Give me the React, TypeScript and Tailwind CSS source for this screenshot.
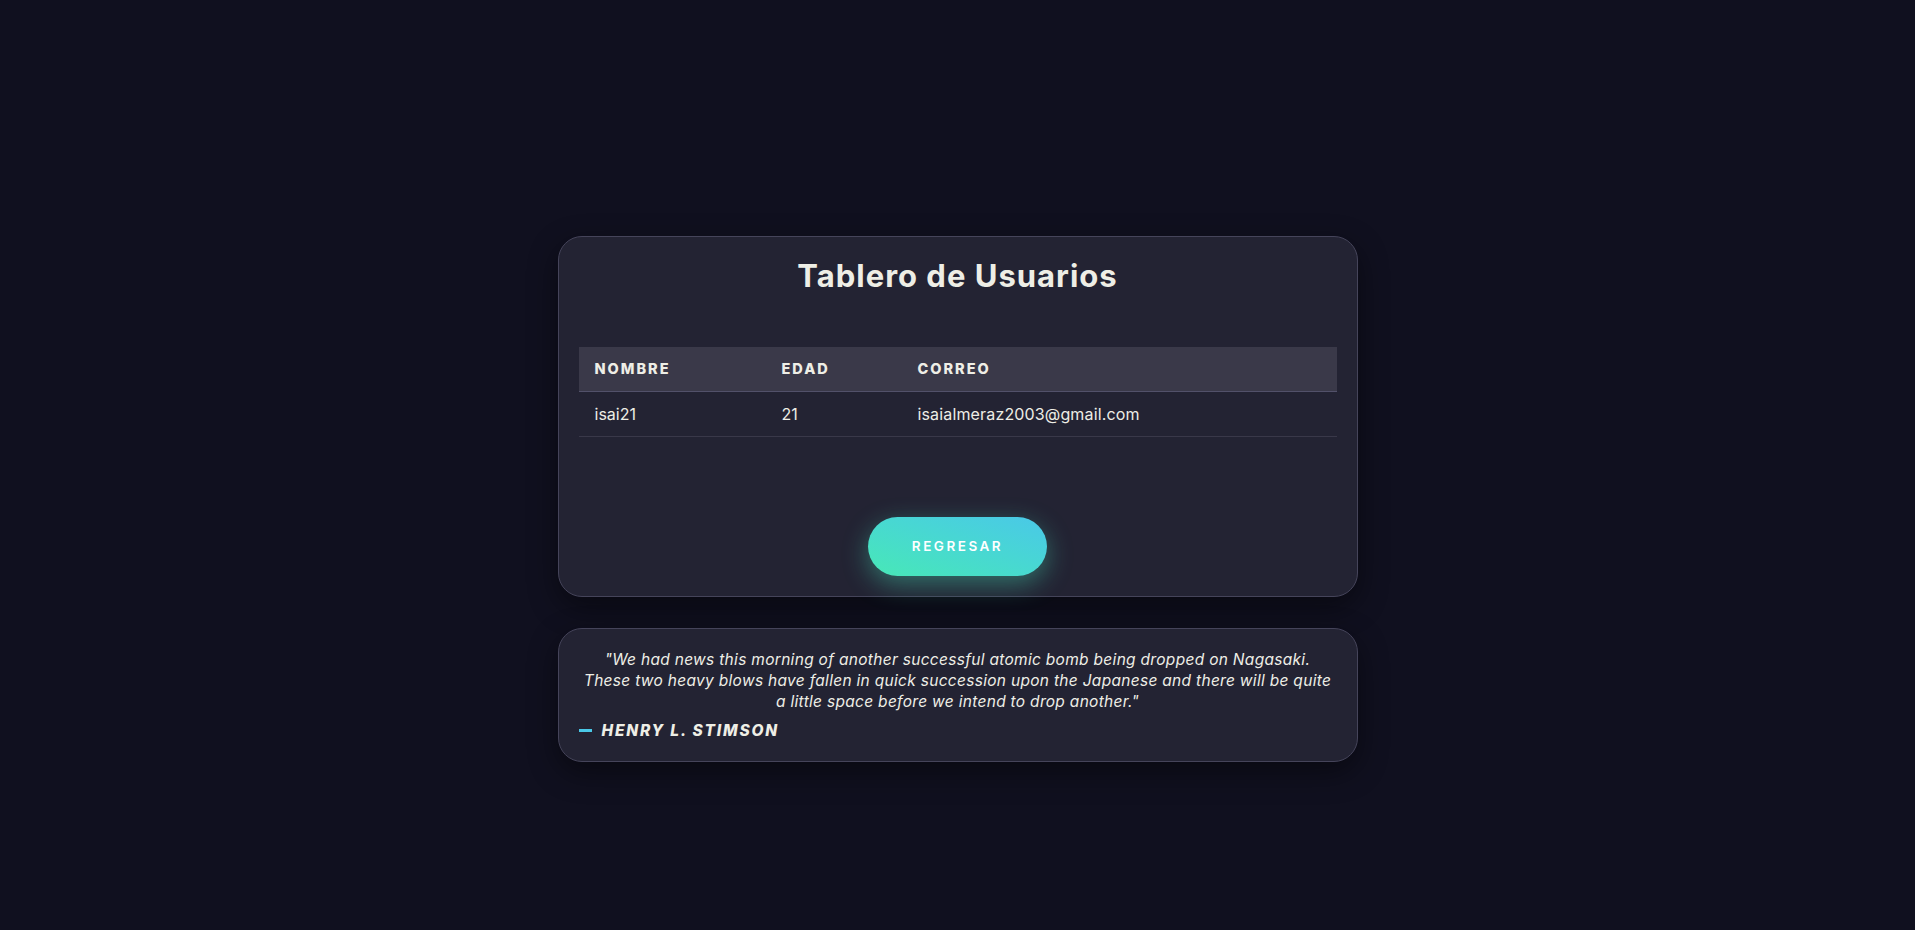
import React from 'react';

const users = [{ nombre: 'isai21', edad: 21, correo: 'isaialmeraz2003@gmail.com' }];

const App = () => {
  return (
    <div
      className="min-h-screen bg-[#10101f] pt-[236px] pb-10 text-[#eeeee6]"
      style={{ fontFamily: 'Inter, "Noto Sans", sans-serif' }}
    >
      <div className="mx-auto w-[800px]">
        <div className="rounded-3xl border border-[#45445a] bg-[#232333] p-5 shadow-[0_10px_30px_rgba(0,0,0,0.45)]">
          <h1 className="text-center text-[31px] leading-[38px] font-bold tracking-[1px]">Tablero de Usuarios</h1>

          <table className="mt-[52px] w-full border-collapse text-left">
            <thead>
              <tr className="bg-[#3a3949] border-b border-[#52516a]">
                <th className="w-[187px] px-4 h-[44px] text-[14.5px] font-extrabold tracking-[2px]">NOMBRE</th>
                <th className="w-[136px] px-4 h-[44px] text-[14.5px] font-extrabold tracking-[2px]">EDAD</th>
                <th className="px-4 h-[44px] text-[14.5px] font-extrabold tracking-[2px]">CORREO</th>
              </tr>
            </thead>
            <tbody>
              {users.map((u) => (
                <tr key={u.nombre} className="border-b border-[#393849]">
                  <td className="px-4 h-[45px] text-[16px]">{u.nombre}</td>
                  <td className="px-4 h-[45px] text-[16px]">{u.edad}</td>
                  <td className="px-4 h-[45px] text-[16px] tracking-[0.15px]">{u.correo}</td>
                </tr>
              ))}
            </tbody>
          </table>

          <div className="mt-[80px] flex justify-center">
            <button className="h-[59px] w-[179px] rounded-full bg-gradient-to-tr from-[#48e8b6] to-[#4ac8e8] text-[13.5px] font-semibold tracking-[2.5px] text-white shadow-[0_8px_26px_rgba(72,232,190,0.4)]">
              REGRESAR
            </button>
          </div>
        </div>

        <div className="mt-[31px] rounded-3xl border border-[#45445a] bg-[#232333] p-5 shadow-[0_10px_30px_rgba(0,0,0,0.45)]">
          <p className="text-center text-[15.5px] leading-[21px] italic tracking-[0.3px]">
            "We had news this morning of another successful atomic bomb being dropped on Nagasaki.
            <br />
            These two heavy blows have fallen in quick succession upon the Japanese and there will be quite
            <br />
            a little space before we intend to drop another."
          </p>
          <div className="mt-2 flex items-center gap-[10px] text-[15.5px] leading-[21px] font-extrabold italic tracking-[1.8px]">
            <span className="inline-block h-[3px] w-[13px] bg-[#4ac8e8]" />
            <span>HENRY L. STIMSON</span>
          </div>
        </div>
      </div>
    </div>
  );
};

export default App;
